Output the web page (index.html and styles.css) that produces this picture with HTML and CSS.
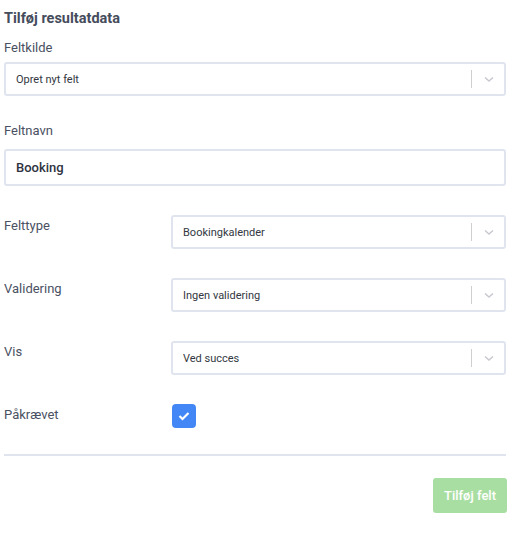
FILE: index.html
```html
<!DOCTYPE html>
<html lang="da">
<head>
    <meta charset="UTF-8">
    <title>Tilføj resultatdata</title>
    <link rel="stylesheet" href="styles.css">
</head>
<body>

<div class="panel">
    <h2 class="title">Tilføj resultatdata</h2>

    <!-- Feltkilde -->
    <label class="label">Feltkilde</label>
    <div class="select">
        <span class="select-value">Opret nyt felt</span>
        <span class="select-sep"></span>
        <svg class="chevron" width="10" height="7" viewBox="0 0 10 7"><path d="M1 1.5 L5 5 L9 1.5" fill="none" stroke="#c7c9cf" stroke-width="1.5"/></svg>
    </div>

    <!-- Feltnavn -->
    <label class="label label-name">Feltnavn</label>
    <div class="input">Booking</div>

    <div class="row">
        <label class="row-label">Felttype</label>
        <div class="select">
            <span class="select-value">Bookingkalender</span>
            <span class="select-sep"></span>
            <svg class="chevron" width="10" height="7" viewBox="0 0 10 7"><path d="M1 1.5 L5 5 L9 1.5" fill="none" stroke="#c7c9cf" stroke-width="1.5"/></svg>
        </div>
    </div>

    <div class="row">
        <label class="row-label">Validering</label>
        <div class="select">
            <span class="select-value">Ingen validering</span>
            <span class="select-sep"></span>
            <svg class="chevron" width="10" height="7" viewBox="0 0 10 7"><path d="M1 1.5 L5 5 L9 1.5" fill="none" stroke="#c7c9cf" stroke-width="1.5"/></svg>
        </div>
    </div>

    <div class="row">
        <label class="row-label">Vis</label>
        <div class="select">
            <span class="select-value">Ved succes</span>
            <span class="select-sep"></span>
            <svg class="chevron" width="10" height="7" viewBox="0 0 10 7"><path d="M1 1.5 L5 5 L9 1.5" fill="none" stroke="#c7c9cf" stroke-width="1.5"/></svg>
        </div>
    </div>

    <div class="row row-check">
        <label class="row-label">Påkrævet</label>
        <span class="checkbox">
            <svg width="12" height="10" viewBox="0 0 12 10"><path d="M1.5 5 L4.5 8 L10.5 2" fill="none" stroke="#fff" stroke-width="2.2"/></svg>
        </span>
    </div>

    <hr class="divider">

    <div class="actions">
        <button class="btn-add">Tilføj felt</button>
    </div>
</div>

</body>
</html>
```

FILE: styles.css
```css
* {
    margin: 0;
    padding: 0;
    box-sizing: border-box;
}
body {
    font-family: Roboto, 'Noto Sans', sans-serif;
    background-color: #fff;
    color: #4a5162;
}
.panel {
    width: 502px;
    margin-left: 4px;
    padding-top: 8px;
}
.title {
    font-size: 14.5px;
    font-weight: 700;
    color: #454c5c;
    line-height: 22px;
    margin-bottom: 9px;
}
.label {
    display: block;
    font-size: 13px;
    line-height: 18px;
    margin-bottom: 5px;
}
.label-name {
    margin-top: 26px;
    margin-bottom: 9px;
}
.select {
    height: 34px;
    border: 2px solid #e0e4ef;
    border-radius: 3px;
    display: flex;
    align-items: center;
    padding-left: 10px;
    padding-right: 10px;
}
.select-value {
    flex: 1;
    font-size: 11px;
    color: #333842;
}
.select-sep {
    width: 1px;
    height: 18px;
    background-color: #cfcfcf;
    margin-right: 12px;
}
.chevron {
    display: block;
}
.input {
    height: 37px;
    border: 2px solid #e0e4ef;
    border-radius: 3px;
    padding-left: 10px;
    font-size: 13px;
    font-weight: 500;
    color: #2e3340;
    display: flex;
    align-items: center;
}
.row {
    display: grid;
    grid-template-columns: 167px 1fr;
    margin-top: 29px;
}
.row-label {
    font-size: 13px;
    line-height: 18px;
    padding-top: 2px;
}
.row-check {
    margin-top: 29px;
}
.checkbox {
    width: 24px;
    height: 24px;
    margin-left: 1px;
    border-radius: 4px;
    background-color: #4287f5;
    display: flex;
    align-items: center;
    justify-content: center;
}
.divider {
    border: none;
    height: 2px;
    background-color: #e0e4ef;
    margin-top: 26px;
}
.actions {
    display: flex;
    justify-content: flex-end;
    margin-top: 22px;
}
.btn-add {
    width: 74px;
    height: 35px;
    border: none;
    border-radius: 3px;
    background-color: #a9dea3;
    color: #fff;
    font-family: Roboto, 'Noto Sans', sans-serif;
    font-size: 13px;
    font-weight: 500;
    margin-right: -1px;
}
```
